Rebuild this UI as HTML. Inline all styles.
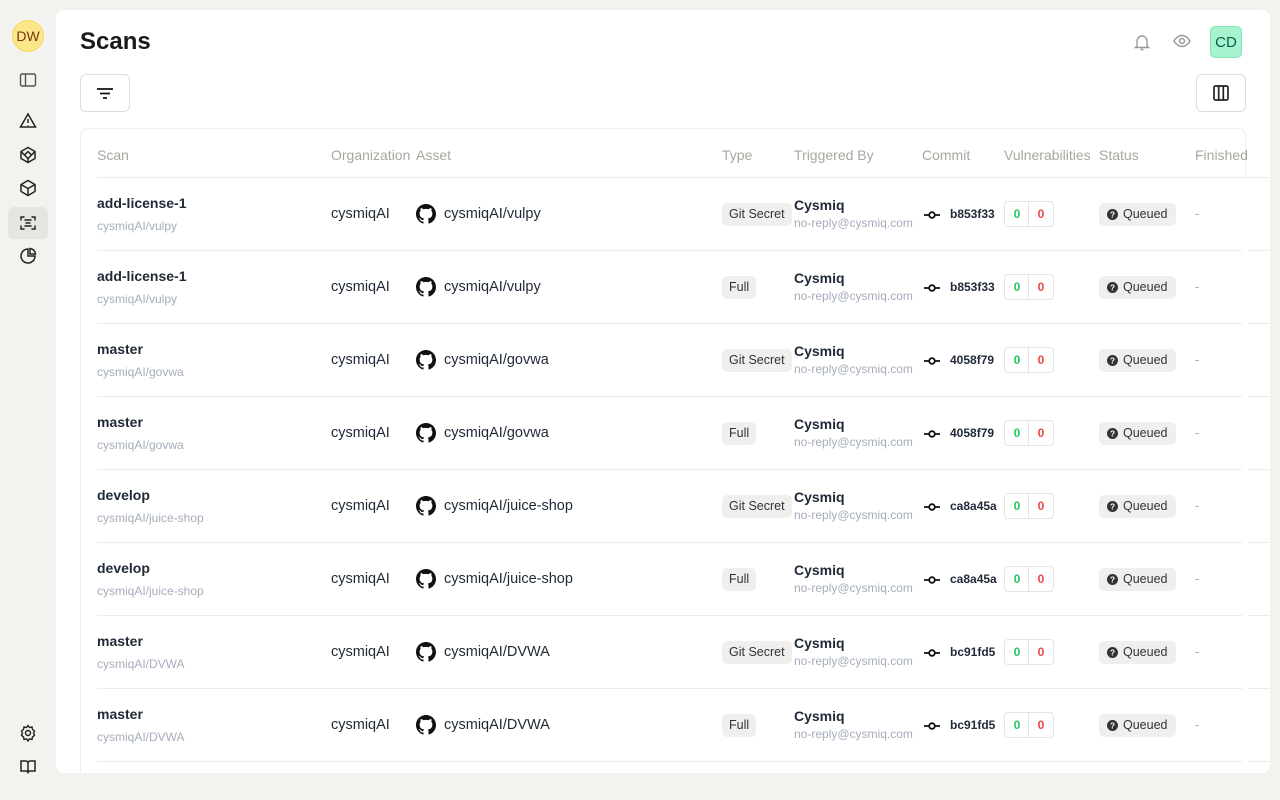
<!DOCTYPE html><html><head><style>
*{margin:0;padding:0;box-sizing:border-box}
body{width:1280px;height:800px;background:#f3f2ef;font-family:"Liberation Sans",sans-serif;position:relative;overflow:hidden;color:#1f2937}
.a{position:absolute}
.main{position:absolute;left:56px;top:10px;width:1214px;height:763px;background:#fff;border-radius:8px;overflow:hidden}
.ic{position:absolute;left:18px;width:20px;height:20px}
.hd{position:absolute;top:146px;font-size:14px;color:#a8a69f}
.row{position:absolute;left:41px;width:1200px;height:73px;border-bottom:1px solid #ececec;background:#fff}
.row div{position:absolute}
.nm{left:0;top:17px;font-size:14px;font-weight:bold;color:#1f2937}
.sb{left:0;top:41px;font-size:12px;color:#a5adbb}
.org{left:234px;top:28px;font-size:14.5px}
.gh{left:319px;top:26px}
.as{left:347px;top:28px;font-size:14.5px}
.ty{left:625px;top:25px;height:23px;padding:0 7px;line-height:23px;font-size:12.5px;background:#f0efed;border-radius:5px;color:#333}
.tb{left:697px;top:19px;font-size:14px;font-weight:bold}
.em{left:697px;top:38px;font-size:12px;color:#a5adbb}
.cm{left:825px;top:30px}
.hs{left:853px;top:29px;font-size:12px;font-weight:bold}
.vb{left:907px;top:23px;width:50px;height:26px;border:1px solid #e4e4e4;border-radius:4px;font-size:12px;font-weight:bold}
.st{left:1002px;top:25px;width:77px;height:23px;background:#f0efed;border-radius:5px;font-size:12.5px;line-height:23px;padding-left:24px;color:#333}
.fn{left:1098px;top:28px;color:#aaa;font-size:13px}
</style></head><body>
<div class="a" style="left:12px;top:20px;width:32px;height:32px;border-radius:50%;background:#fde68a;border:1px solid #f6d860;font-size:14px;color:#78350f;text-align:center;line-height:30px">DW</div>
<svg class="ic" style="top:70px" viewBox="0 0 20 20" fill="none" stroke="#555" stroke-width="1.4"><rect x="2.5" y="4" width="15" height="12" rx="1.5"/><path d="M7.5 4v12"/></svg>
<svg class="ic" style="top:111px" viewBox="0 0 20 20" fill="none" stroke="#222" stroke-width="1.5"><path d="M10 3L2.5 16h15z"/><path d="M10 8v4M10 14v.5"/></svg>
<svg class="ic" style="top:145px" viewBox="0 0 20 20" fill="none" stroke="#222" stroke-width="1.5"><path d="M10 2.5l7 4v7l-7 4-7-4v-7z"/><path d="M10 6.5l3.5 3.5-3.5 3.5-3.5-3.5z"/><path d="M3 6.5l3.5 3.5M17 6.5l-3.5 3.5M10 17.5v-4"/></svg>
<svg class="ic" style="top:178px" viewBox="0 0 20 20" fill="none" stroke="#222" stroke-width="1.5"><path d="M10 2.5l7 4v7l-7 4-7-4v-7z"/><path d="M3 6.5l7 4 7-4M10 10.5v7"/></svg>
<div class="a" style="left:8px;top:207px;width:40px;height:32px;background:#e6e5e1;border-radius:6px"></div>
<svg class="ic" style="top:213px" viewBox="0 0 20 20" fill="none" stroke="#222" stroke-width="1.4" stroke-linecap="round"><path d="M3 7V4h3M14 4h3v3M17 13v3h-3M6 16H3v-3M7 7h6M8 10h4M7 13h6"/></svg>
<svg class="ic" style="top:246px" viewBox="0 0 20 20" fill="none" stroke="#222" stroke-width="1.5"><path d="M10 3a7 7 0 1 0 7 7h-7z"/><path d="M12 2.5a6 6 0 0 1 5.5 5.5H12z"/></svg>
<svg class="ic" style="top:723px" viewBox="0 0 20 20" fill="none" stroke="#222" stroke-width="1.4"><circle cx="10" cy="10" r="2.5"/><path d="M10 2.5l1.5 2 2.5-.5.5 2.5 2 1.5-1 2.2 1 2.2-2 1.5-.5 2.5-2.5-.5-1.5 2-1.5-2-2.5.5-.5-2.5-2-1.5 1-2.2-1-2.2 2-1.5.5-2.5 2.5.5z"/></svg>
<svg class="ic" style="top:757px" viewBox="0 0 20 20" fill="none" stroke="#222" stroke-width="1.5"><path d="M10 5.5v11M3 4h5a2 2 0 0 1 2 2 2 2 0 0 1 2-2h5v10h-5a2 2 0 0 0-2 2 2 2 0 0 0-2-2H3z"/></svg>
<div class="main">
<div class="a" style="left:24px;top:18px;font-size:24px;font-weight:bold;color:#1a1a1a">Scans</div>
<svg class="a" style="left:1076px;top:22px" width="20" height="20" viewBox="0 0 20 20" fill="none" stroke="#999" stroke-width="1.4"><path d="M5 14V9a5 5 0 0 1 10 0v5l1.5 1.5h-13zM8.5 17.5h3"/></svg>
<svg class="a" style="left:1116px;top:21px" width="20" height="20" viewBox="0 0 20 20" fill="none" stroke="#999" stroke-width="1.4"><path d="M2 10s3-5.5 8-5.5 8 5.5 8 5.5-3 5.5-8 5.5S2 10 2 10z"/><circle cx="10" cy="10" r="2.5"/></svg>
<div class="a" style="left:1154px;top:16px;width:32px;height:32px;background:#a7f3d0;border:1px solid #86e3b5;border-radius:5px;color:#065f46;font-size:15px;text-align:center;line-height:31px">CD</div>
<div class="a" style="left:24px;top:64px;width:50px;height:38px;border:1px solid #ddd;border-radius:6px"></div>
<svg class="a" style="left:39px;top:73px" width="20" height="20" viewBox="0 0 20 20" stroke="#111" stroke-width="1.7"><path d="M2 6h16M5 10.5h10M8 15h4"/></svg>
<div class="a" style="left:1140px;top:64px;width:50px;height:38px;border:1px solid #ddd;border-radius:6px"></div>
<svg class="a" style="left:1155px;top:73px" width="20" height="20" viewBox="0 0 20 20" fill="none" stroke="#222" stroke-width="1.7"><rect x="3" y="3" width="14" height="14" rx="1.5"/><path d="M7.7 3v14M12.3 3v14"/></svg>
<div class="a" style="left:24px;top:118px;width:1166px;height:700px;border:1px solid #eee;border-radius:8px"></div>
<div class="hd" style="left:41px;top:137px">Scan</div>
<div class="hd" style="left:275px;top:137px">Organization</div>
<div class="hd" style="left:360px;top:137px">Asset</div>
<div class="hd" style="left:666px;top:137px">Type</div>
<div class="hd" style="left:738px;top:137px">Triggered By</div>
<div class="hd" style="left:866px;top:137px">Commit</div>
<div class="hd" style="left:948px;top:137px">Vulnerabilities</div>
<div class="hd" style="left:1043px;top:137px">Status</div>
<div class="hd" style="left:1139px;top:137px">Finished</div>
<div class="a" style="left:41px;top:167px;width:1200px;border-top:1px solid #ececec"></div>
<div id="rows"></div>
<div class="a" style="left:1186px;top:168px;width:6px;height:600px;background:#fff"></div>
</div>
<script>
var d=[["add-license-1","vulpy","Git Secret","b853f33"],["add-license-1","vulpy","Full","b853f33"],["master","govwa","Git Secret","4058f79"],["master","govwa","Full","4058f79"],["develop","juice-shop","Git Secret","ca8a45a"],["develop","juice-shop","Full","ca8a45a"],["master","DVWA","Git Secret","bc91fd5"],["master","DVWA","Full","bc91fd5"]];
var h="";
var gh='<svg width="20" height="20" viewBox="0 0 16 16"><path fill="#111" d="M8 0C3.58 0 0 3.58 0 8c0 3.54 2.29 6.53 5.47 7.59.4.07.55-.17.55-.38v-1.33c-2.23.48-2.7-1.07-2.7-1.07-.36-.92-.89-1.17-.89-1.17-.73-.5.05-.49.05-.49.8.06 1.23.83 1.23.83.72 1.22 1.87.87 2.33.66.07-.52.28-.87.5-1.07-1.78-.2-3.65-.89-3.65-3.95 0-.87.31-1.59.82-2.15-.08-.2-.36-1.02.08-2.12 0 0 .67-.21 2.2.82a7.6 7.6 0 0 1 4 0c1.53-1.04 2.2-.82 2.2-.82.44 1.1.16 1.92.08 2.12.51.56.82 1.27.82 2.15 0 3.07-1.87 3.75-3.65 3.95.29.25.54.73.54 1.48v2.2c0 .21.15.46.55.38A8.01 8.01 0 0 0 16 8c0-4.42-3.58-8-8-8z"/></svg>';
var cm='<svg width="20" height="12" viewBox="0 0 20 12" fill="none" stroke="#111" stroke-width="1.8"><circle cx="10" cy="6" r="2.8"/><path d="M2 6h5M13 6h5"/></svg>';
var q='<svg style="position:absolute;left:8px;top:6px" width="11" height="11" viewBox="0 0 12 12"><circle cx="6" cy="6" r="6" fill="#333"/><text x="6" y="9.5" font-size="9" font-weight="bold" fill="#fff" text-anchor="middle" font-family="Liberation Sans">?</text></svg>';
d.forEach(function(r,i){h+='<div class="row" style="top:'+(168+73*i)+'px"><div class="nm">'+r[0]+'</div><div class="sb">cysmiqAI/'+r[1]+'</div><div class="org">cysmiqAI</div><div class="gh">'+gh+'</div><div class="as">cysmiqAI/'+r[1]+'</div><div class="ty">'+r[2]+'</div><div class="tb">Cysmiq</div><div class="em">no-reply@cysmiq.com</div><div class="cm">'+cm+'</div><div class="hs">'+r[3]+'</div><div class="vb"><span style="position:absolute;left:0;width:24px;top:5px;text-align:center;color:#22c55e">0</span><span style="position:absolute;left:23px;top:0;height:24px;border-left:1px solid #e4e4e4"></span><span style="position:absolute;left:24px;width:24px;top:5px;text-align:center;color:#ef4444">0</span></div><div class="st">'+q+'Queued</div><div class="fn">-</div></div>'});
document.getElementById("rows").innerHTML=h;
</script>
</body></html>
